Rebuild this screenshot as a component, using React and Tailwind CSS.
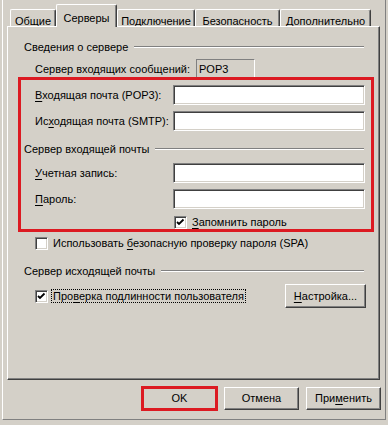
import React from "react";

const FONT = { fontFamily: '"Liberation Sans", Arial, sans-serif' };

function U({ children }) {
  return <span className="underline underline-offset-[2px]">{children}</span>;
}

function Sunken({ className = "" }) {
  return (
    <div
      className={
        "bg-white border border-t-[#808080] border-l-[#808080] border-b-white border-r-white shadow-[inset_1px_1px_0_#404040,inset_-1px_-1px_0_#d4d0c8] " +
        className
      }
    />
  );
}

function Check({ checked }) {
  return (
    <div className="w-[13px] h-[13px] shrink-0 bg-white border border-t-[#808080] border-l-[#808080] border-b-white border-r-white shadow-[inset_1px_1px_0_#404040,inset_-1px_-1px_0_#d4d0c8] flex items-center justify-center">
      {checked && (
        <svg width="9" height="9" viewBox="0 0 9 9">
          <path d="M1 4 L3 6 L7.5 1.5" fill="none" stroke="#000" strokeWidth="1.8" />
        </svg>
      )}
    </div>
  );
}

function Header({ children, className = "" }) {
  return (
    <div className={"flex items-center h-[14px] pl-[16px] pr-[15px] gap-[6px] " + className}>
      <span className="whitespace-nowrap leading-none">{children}</span>
      <div className="flex-1 h-[2px] border-t border-t-[#808080] border-b border-b-white" />
    </div>
  );
}

function InputRow({ label, className = "" }) {
  return (
    <div className={"flex items-center h-[20px] pl-[27px] " + className}>
      <span className="w-[138px] whitespace-nowrap leading-none">{label}</span>
      <Sunken className="w-[192px] h-[20px]" />
    </div>
  );
}

function Button({ children, className = "" }) {
  return (
    <div
      className={
        "w-[75px] h-[23px] flex items-center justify-center border border-t-white border-l-white border-b-[#404040] border-r-[#404040] shadow-[inset_-1px_-1px_0_#808080] leading-none " +
        className
      }
    >
      {children}
    </div>
  );
}

function Tab({ children, w, selected }) {
  if (selected) {
    return (
      <div
        className="relative z-10 -mb-px h-[23px] flex items-start justify-center pt-[5px] bg-[#d4d0c8] border-t border-l border-t-white border-l-white border-r border-r-[#404040] shadow-[inset_-1px_0_0_#808080] rounded-t-[2px]"
        style={{ width: w }}
      >
        {children}
      </div>
    );
  }
  return (
    <div
      className="h-[17px] flex items-start justify-center pt-[3px] border-t border-l border-t-white border-l-white border-r border-r-[#404040] shadow-[inset_-1px_0_0_#808080] rounded-t-[2px]"
      style={{ width: w }}
    >
      {children}
    </div>
  );
}

export default function App() {
  return (
    <div className="w-[388px] h-[425px] bg-[#d4d0c8] text-black text-[11px] overflow-hidden" style={FONT}>
      <div className="ml-[2px] w-[384px] h-[420px] border-l border-l-white border-b border-b-[#808080] border-r border-r-[#808080]">
        {/* tabs */}
        <div className="h-[26px] flex items-end pl-[7px]">
          <Tab w={46}>Общие</Tab>
          <Tab w={61} selected>Серверы</Tab>
          <Tab w={78}>Подключение</Tab>
          <Tab w={85}>Безопасность</Tab>
          <Tab w={91}>Дополнительно</Tab>
        </div>
        {/* panel */}
        <div className="relative ml-[4px] w-[373px] h-[354px] border border-t-white border-l-white border-r-[#404040] border-b-[#404040] shadow-[inset_-1px_-1px_0_#808080]">
          <Header className="mt-[13px]">Сведения о сервере</Header>
          <div className="flex items-center h-[20px] pl-[27px] mt-[5px]">
            <span className="w-[161px] whitespace-nowrap leading-none">
              Сервер вхо<U>д</U>ящих сообщений:
            </span>
            <div className="w-[59px] h-[20px] border border-t-[#808080] border-l-[#808080] border-b-white border-r-white flex items-center pl-[2px] leading-none">
              POP3
            </div>
          </div>
          <InputRow className="mt-[6px]" label={<><U>В</U>ходящая почта (POP3):</>} />
          <InputRow className="mt-[6px]" label={<>Ис<U>х</U>одящая почта (SMTP):</>} />
          <Header className="mt-[11px]">Сервер входящей почты</Header>
          <InputRow className="mt-[7px]" label={<><U>У</U>четная запись:</>} />
          <InputRow className="mt-[6px]" label={<><U>П</U>ароль:</>} />
          <div className="flex items-center h-[13px] mt-[7px] pl-[166px] gap-[5px]">
            <Check checked />
            <span className="whitespace-nowrap leading-none"><U>З</U>апомнить пароль</span>
          </div>
          <div className="flex items-center h-[13px] mt-[8px] pl-[27px] gap-[5px]">
            <Check />
            <span className="whitespace-nowrap leading-none">
              Использовать <U>б</U>езопасную проверку пароля (SPA)
            </span>
          </div>
          <Header className="mt-[14px]">Сервер исходящей почты</Header>
          <div className="flex items-center h-[24px] mt-[6px] pl-[27px] pr-[13px]">
            <Check checked />
            <span className="ml-[3px] px-[1px] h-[14px] flex items-center whitespace-nowrap leading-none border border-dotted border-black">
              Про<U>в</U>ерка подлинности пользователя
            </span>
            <div className="flex-1" />
            <Button className="w-[81px] h-[24px]">
              <span><U>Н</U>астройка...</span>
            </Button>
          </div>
          {/* red annotation */}
          <div className="absolute left-[10px] top-[50px] w-[356px] h-[155px] border-[3px] border-[#dc1a22] pointer-events-none" />
        </div>
        {/* buttons */}
        <div className="flex mt-[7px] pl-[139px] gap-[7px]">
          <div className="relative">
            <Button>OK</Button>
            <div className="absolute -inset-px border-[3px] border-[#dc1a22]" />
          </div>
          <Button>Отмена</Button>
          <Button>При<U>м</U>енить</Button>
        </div>
      </div>
    </div>
  );
}
